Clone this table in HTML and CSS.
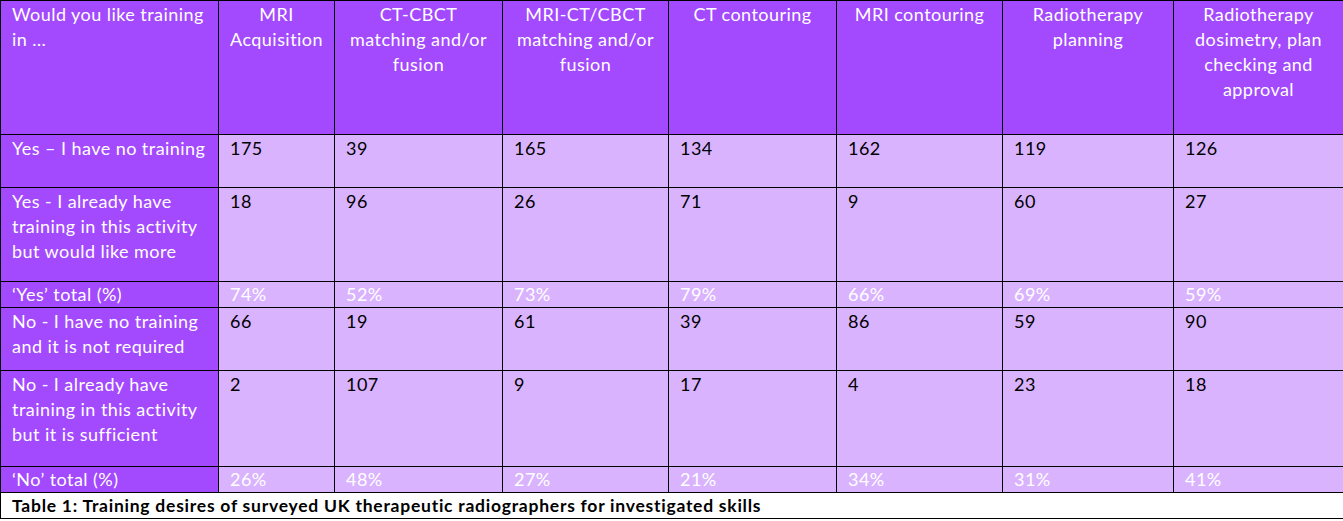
FILE: index.html
```html
<!DOCTYPE html>
<html lang="en">
<head>
<meta charset="utf-8">
<title>Training desires</title>
<link rel="stylesheet" href="styles.css">
</head>
<body>
<table class="grid">
  <colgroup>
    <col class="c0"><col class="c1"><col class="c2"><col class="c3"><col class="c4"><col class="c5"><col class="c6"><col class="c7">
  </colgroup>
  <tr class="r-head">
    <th class="lab">Would you like training in …</th>
    <th>MRI Acquisition</th>
    <th>CT-CBCT matching and/or fusion</th>
    <th>MRI-CT/CBCT matching and/or fusion</th>
    <th>CT contouring</th>
    <th>MRI contouring</th>
    <th>Radiotherapy planning</th>
    <th>Radiotherapy dosimetry, plan checking and approval</th>
  </tr>
  <tr class="r1">
    <th class="lab">Yes – I have no training</th>
    <td>175</td><td>39</td><td>165</td><td>134</td><td>162</td><td>119</td><td>126</td>
  </tr>
  <tr class="r2">
    <th class="lab">Yes - I already have training in this activity but would like more</th>
    <td>18</td><td>96</td><td>26</td><td>71</td><td>9</td><td>60</td><td>27</td>
  </tr>
  <tr class="r3 total">
    <th class="lab">‘Yes’ total (%)</th>
    <td>74%</td><td>52%</td><td>73%</td><td>79%</td><td>66%</td><td>69%</td><td>59%</td>
  </tr>
  <tr class="r4">
    <th class="lab">No - I have no training and it is not required</th>
    <td>66</td><td>19</td><td>61</td><td>39</td><td>86</td><td>59</td><td>90</td>
  </tr>
  <tr class="r5">
    <th class="lab">No - I already have training in this activity but it is sufficient</th>
    <td>2</td><td>107</td><td>9</td><td>17</td><td>4</td><td>23</td><td>18</td>
  </tr>
  <tr class="r6 total">
    <th class="lab">‘No’ total (%)</th>
    <td>26%</td><td>48%</td><td>27%</td><td>21%</td><td>34%</td><td>31%</td><td>41%</td>
  </tr>
  <tr class="r-cap">
    <td class="caption" colspan="8">Table 1: Training desires of surveyed UK therapeutic radiographers for investigated skills</td>
  </tr>
</table>
</body>
</html>
```

FILE: styles.css
```css
html, body {
  margin: 0;
  padding: 0;
  background: #ffffff;
}

body {
  font-family: "Lato", "Open Sans", sans-serif;
  font-size: 18px;
  letter-spacing: 0.45px;
  line-height: 25px;
  color: #000;
}

.grid {
  border-collapse: collapse;
  table-layout: fixed;
  width: 1343px;
}

.c0 { width: 218px; }
.c1 { width: 116px; }
.c2 { width: 168px; }
.c3 { width: 166px; }
.c4 { width: 168px; }
.c5 { width: 166px; }
.c6 { width: 171px; }
.c7 { width: 170px; }

.grid th,
.grid td {
  border: 1px solid #000;
  padding: 1px 10px 0 11px;
  vertical-align: top;
  font-weight: normal;
  text-align: left;
  overflow: hidden;
}

.r-head th {
  background: #a349fe;
  color: #ffffff;
  text-align: center;
  padding-left: 6px;
  padding-right: 6px;
}

.r-head th.lab {
  text-align: left;
  padding-left: 11px;
  padding-right: 10px;
}

.grid th.lab {
  background: #a349fe;
  color: #ffffff;
}

.grid td {
  background: #dab3ff;
  color: #000;
}

.total td {
  color: #ffffff;
}

.r-head { height: 134px; }
.r1 { height: 53px; }
.r2 { height: 94px; }
.r3 { height: 26px; }
.r4 { height: 63px; }
.r5 { height: 96px; }
.r6 { height: 25px; }
.r-cap { height: 26px; }

.total th,
.total td {
  padding-top: 0;
}

.grid td.caption {
  background: #ffffff;
  font-weight: bold;
  font-size: 17.5px;
  letter-spacing: 0.75px;
  line-height: 24px;
  padding: 1px 11px 0 11px;
  border-right: none;
}
```
